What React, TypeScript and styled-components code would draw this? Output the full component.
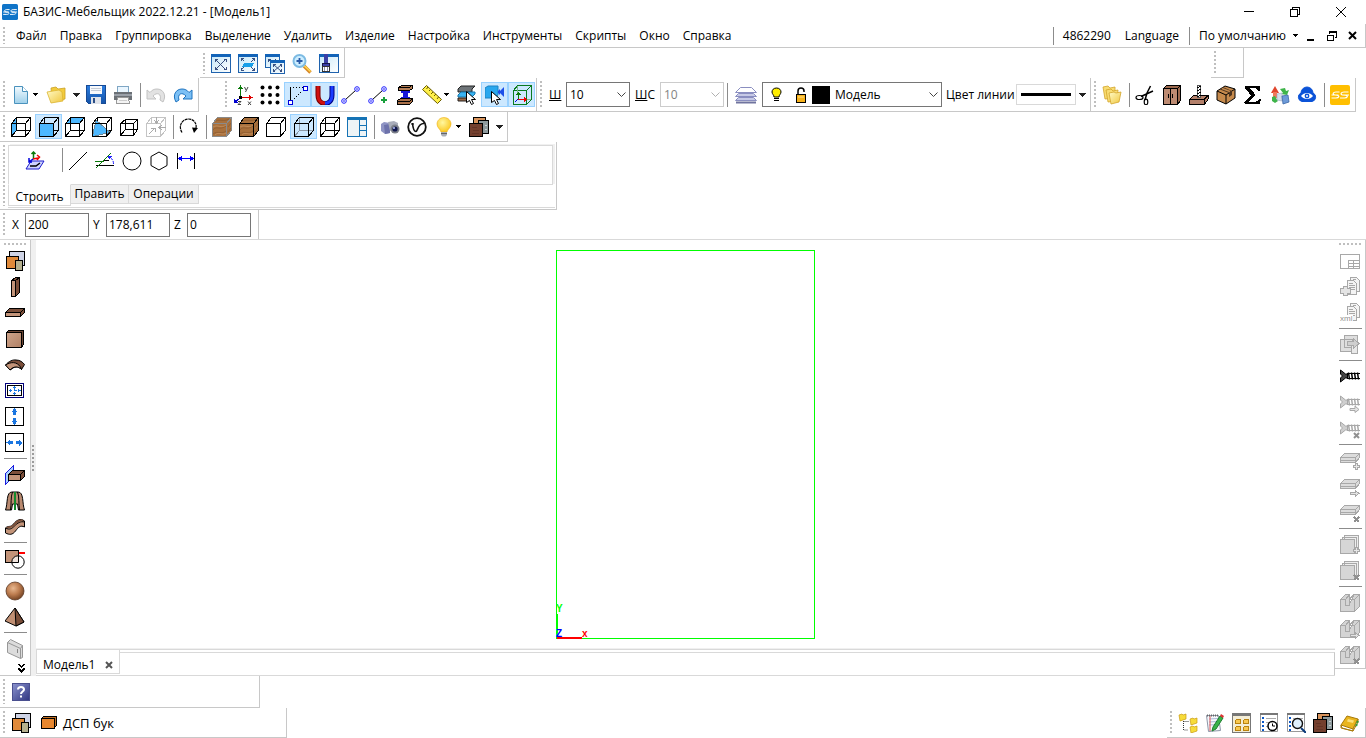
import React from "react";
import styled, { createGlobalStyle, css } from "styled-components";

const LINE = "#c8c8c8";
const SOFT = "#d9d9d9";
const FACE = "#f0f0f0";

const GlobalStyle = createGlobalStyle`
  * { box-sizing: border-box; }
  body { margin: 0; background: #fff; }
  body, button, input, select {
    font-family: "Open Sans", "Noto Sans", sans-serif;
    font-size: 12px;
    line-height: 16px;
    color: #000;
  }
  svg { display: block; flex: none; }
`;

/* ---------- page frame ---------- */

const Page = styled.div`
  display: flex;
  flex-direction: column;
  min-height: 100vh;
  overflow: hidden;
`;

const TitleBar = styled.header`
  display: flex;
  align-items: center;
  height: 24px;
  padding: 0 2px;
`;

const Title = styled.h1`
  flex: 1;
  margin: 0 0 0 5px;
  font-size: 12px;
  font-weight: 400;
  white-space: nowrap;
`;

const PlainButton = styled.button`
  display: flex;
  align-items: center;
  justify-content: center;
  flex: none;
  padding: 0;
  border: 0;
  background: none;
  white-space: nowrap;
`;

const CaptionButton = styled(PlainButton)`
  width: 46px;
  height: 20px;
`;

const MenuBar = styled.nav`
  display: flex;
  align-items: center;
  height: 24px;
  border-right: 1px solid ${LINE};
  border-bottom: 1px solid ${LINE};
`;

const MenuItem = styled(PlainButton)`
  height: 22px;
`;

const MenuList = styled.div`
  display: flex;
  gap: 13px;
  padding-left: 8px;
`;

const MenuRight = styled.div`
  display: flex;
  align-items: center;
  margin-left: auto;
  padding-right: 3px;
`;

const StatusItem = styled(MenuItem)`
  padding: 0 7px;
`;

const ChildButton = styled(PlainButton)<{ $w: number }>`
  width: ${(p) => p.$w}px;
  height: 20px;
`;

const Row = styled.div<{ $h: number; $indent?: number }>`
  display: flex;
  flex: none;
  height: ${(p) => p.$h}px;
  padding-left: ${(p) => p.$indent || 0}px;
`;

const Toolbar = styled.div<{ $gap?: number; $w?: number; $end?: number; $push?: boolean; $low?: boolean }>`
  display: flex;
  align-items: center;
  flex: none;
  width: ${(p) => (p.$w ? p.$w + "px" : "auto")};
  margin-left: ${(p) => (p.$push ? "auto" : (p.$gap || 0) + "px")};
  margin-right: ${(p) => p.$end || 0}px;
  padding-top: ${(p) => (p.$low ? 2 : 0)}px;
  padding-right: 1px;
  border-right: 1px solid ${LINE};
  border-bottom: 1px solid ${LINE};
`;

const Grip = styled.div`
  flex: none;
  align-self: stretch;
  width: 2px;
  margin: 3px 3px;
  background: repeating-linear-gradient(to bottom, #bfbfbf 0 2px, transparent 2px 4px);
`;

const TopGrip = styled.div`
  flex: none;
  width: 23px;
  height: 2px;
  margin: 3px auto;
  background: repeating-linear-gradient(to right, #bfbfbf 0 2px, transparent 2px 4px);
`;

const ToolButton = styled(PlainButton)<{ $on?: boolean; $w?: number }>`
  width: ${(p) => p.$w || 27}px;
  height: 25px;
  padding-right: ${(p) => (p.$w || p.$on ? 0 : 1)}px;
  ${(p) =>
    p.$on &&
    css`
      background: #cce8ff;
      border: 1px solid #99d1ff;
    `}
`;

const SideButton = styled(PlainButton)`
  width: 27px;
  height: 26px;
`;

const DropButton = styled(PlainButton)<{ $wide?: boolean }>`
  width: ${(p) => (p.$wide ? 13 : 10)}px;
  margin-left: ${(p) => (p.$wide ? 0 : -2)}px;
  height: 25px;
  justify-content: ${(p) => (p.$wide ? "center" : "flex-start")};
`;

const Sep = styled.div<{ $h?: number }>`
  flex: none;
  width: 1px;
  height: ${(p) => p.$h || 24}px;
  margin: 0 2px 0 3px;
  background: #8c8c8c;
`;

const SideSep = styled.div`
  flex: none;
  width: 23px;
  height: 1px;
  margin: 2px auto 3px;
  background: #8c8c8c;
`;

/* ---------- fields ---------- */

const FieldLabel = styled.label<{ $w: number; $gap?: number }>`
  flex: none;
  width: ${(p) => p.$w}px;
  margin-left: ${(p) => p.$gap || 0}px;
  white-space: nowrap;
`;

const Combo = styled.div<{ $w: number; $off?: boolean }>`
  position: relative;
  display: flex;
  align-items: center;
  flex: none;
  width: ${(p) => p.$w}px;
  height: 25px;
  border: 1px solid ${(p) => (p.$off ? "#cccccc" : "#767676")};
  background: #fff;
`;

const ComboSelect = styled.select`
  flex: 1;
  min-width: 0;
  height: 22px;
  padding: 0 20px 0 3px;
  border: 0;
  outline: 0;
  appearance: none;
  background: none;
  &:disabled { color: #838383; opacity: 1; }
`;

const ComboArrow = styled.span`
  position: absolute;
  right: 3px;
  top: 9px;
  pointer-events: none;
`;

const ComboIcons = styled.span`
  display: flex;
  align-items: center;
  gap: 13px;
  padding-left: 8px;
`;

const Swatch = styled.span`
  flex: none;
  width: 18px;
  height: 18px;
  margin: 0 2px 0 5px;
  background: #000;
`;

const LineBox = styled(PlainButton)`
  width: 60px;
  height: 21px;
  border: 1px solid ${SOFT};
`;

const LineSample = styled.span`
  width: 50px;
  height: 3px;
  background: #000;
`;

const CoordLabel = styled.label`
  flex: none;
  width: 17px;
  padding-left: 4px;
`;

const CoordInput = styled.input`
  flex: none;
  width: 64px;
  height: 24px;
  padding: 0 2px;
  border: 1px solid #767676;
  border-radius: 0;
  outline: 0;
`;

/* ---------- tabbed tool panel ---------- */

const TabPanel = styled.section`
  display: flex;
  flex: none;
  width: 557px;
  border-right: 1px solid ${LINE};
  border-bottom: 1px solid ${LINE};
`;

const TabBody = styled.div`
  display: flex;
  flex-direction: column;
  flex: 1;
  margin: 2px 1px 1px 0;
  border-bottom: 1px solid ${SOFT};
`;

const TabTools = styled.div`
  display: flex;
  align-items: flex-start;
  height: 40px;
  padding: 2px 0 0 13px;
  border: 1px solid ${SOFT};
  box-shadow: 2px -1px 0 ${FACE};
  margin: 1px 2px 0 0;
`;

const TabGap = styled.div`
  width: 10px;
`;

const TabStrip = styled.div`
  display: flex;
  align-items: flex-start;
  margin-top: -1px;
`;

const Tab = styled.button<{ $active?: boolean; $w: number }>`
  width: ${(p) => p.$w}px;
  height: ${(p) => (p.$active ? 22 : 20)}px;
  padding: ${(p) => (p.$active ? "4px 0 0" : "0")};
  border: 1px solid ${SOFT};
  border-left-width: ${(p) => (p.$active ? 1 : 0)}px;
  border-top-color: ${(p) => (p.$active ? "#fff" : SOFT)};
  background: ${(p) => (p.$active ? "#fff" : FACE)};
  white-space: nowrap;
`;

/* ---------- work area ---------- */

const Work = styled.main`
  display: flex;
  flex: 1;
  border-top: 1px solid ${SOFT};
  margin-top: -1px;
`;

const SideBar = styled.div<{ $left?: boolean }>`
  display: flex;
  flex-direction: column;
  align-items: center;
  align-self: ${(p) => (p.$left ? "stretch" : "flex-start")};
  flex: none;
  width: 31px;
  border-right: 1px solid ${LINE};
  border-bottom: 1px solid ${LINE};
`;

const MoreButton = styled(PlainButton)`
  width: 27px;
  height: 12px;
  padding-left: 12px;
`;

const Splitter = styled.div`
  display: flex;
  align-items: center;
  flex: none;
  width: 5px;
  padding-left: 1px;
  background: ${FACE};
`;

const SplitterDots = styled.div`
  width: 2px;
  height: 26px;
  background: repeating-linear-gradient(to bottom, #9c9c9c 0 2px, transparent 2px 4px);
`;

const Center = styled.div`
  display: flex;
  flex-direction: column;
  flex: 1;
  min-width: 0;
`;

const Viewport = styled.div`
  display: flex;
  justify-content: center;
  flex: 1;
  padding-top: 10px;
  border-bottom: 1px solid ${FACE};
`;

const DocTabs = styled.div`
  display: flex;
  flex: none;
  height: 27px;
  border-top: 1px solid ${SOFT};
  border-bottom: 1px solid ${SOFT};
`;

const DocTab = styled.div`
  display: flex;
  align-items: center;
  justify-content: space-between;
  flex: none;
  width: 84px;
  height: 24px;
  padding: 6px 6px 0;
  border: 1px solid ${SOFT};
  border-top: 0;
`;

const DocRest = styled.div`
  flex: 1;
  margin-top: 2px;
  border-top: 1px solid ${SOFT};
  border-right: 1px solid ${LINE};
`;

const Material = styled(PlainButton)`
  gap: 6px;
  padding-left: 6px;
  font-size: 13px;
`;

/* ---------- icons ---------- */

type SvgProps = { children: React.ReactNode; w?: number; h?: number; soft?: boolean };
const Svg = ({ children, w = 20, h = 20, soft }: SvgProps) => (
  <svg width={w} height={h} viewBox={`0 0 ${w} ${h}`} fill="none" shapeRendering={soft ? "auto" : "crispEdges"} aria-hidden="true">
    {children}
  </svg>
);

const Defs = () => (
  <svg width="0" height="0" aria-hidden="true">
    <defs>
      <linearGradient id="sky" x1="0" y1="0" x2="1" y2="1"><stop offset="0" stopColor="#c4e6f8" /><stop offset="1" stopColor="#fff" /></linearGradient>
      <linearGradient id="page" x1="0" y1="0" x2="0" y2="1"><stop offset="0" stopColor="#f4fbff" /><stop offset="1" stopColor="#9fd0ea" /></linearGradient>
      <linearGradient id="gold" x1="0" y1="0" x2="1" y2="1"><stop offset="0" stopColor="#fffbc8" /><stop offset="1" stopColor="#f0c63c" /></linearGradient>
      <linearGradient id="wood" x1="0" y1="0" x2="1" y2="1"><stop offset="0" stopColor="#cfa58c" /><stop offset="1" stopColor="#b08064" /></linearGradient>
      <linearGradient id="blue" x1="0" y1="0" x2="0" y2="1"><stop offset="0" stopColor="#2b7de0" /><stop offset="1" stopColor="#1453a8" /></linearGradient>
      <linearGradient id="night" x1="0" y1="0" x2="1" y2="1"><stop offset="0" stopColor="#8c94cf" /><stop offset="1" stopColor="#2f3580" /></linearGradient>
      <radialGradient id="ball" cx="0.4" cy="0.35" r="0.7"><stop offset="0" stopColor="#e8b890" /><stop offset="0.5" stopColor="#bd7d50" /><stop offset="1" stopColor="#6d3d1e" /></radialGradient>
      <radialGradient id="glow" cx="0.4" cy="0.35" r="0.7"><stop offset="0" stopColor="#fff7a0" /><stop offset="1" stopColor="#fbc61a" /></radialGradient>
    </defs>
  </svg>
);

const Down = ({ wide }: { wide?: boolean }) =>
  wide ? <Svg w={7} h={4}><path d="M0 0h7L3.500 4z" fill="#222" /></Svg> : <Svg w={5} h={3}><path d="M0 0h5L2.500 3z" fill="#000" /></Svg>;

const Chevron = ({ color = "#444" }: { color?: string }) => (
  <Svg w={9} h={6} soft><path d="M.5.500l4 4 4-4" stroke={color} /></Svg>
);

const Brand = ({ bg, size }: { bg: string; size: number }) => (
  <svg width={size} height={size} viewBox="0 0 20 20" fill="none" aria-hidden="true">
    <rect width="20" height="20" rx="2" fill={bg} />
    <path d="M9.500 7H6C3 7 2 9.500 5 10l2 .2c3 .5 2 2.800-1 2.800H1.500M1.500 10h7M18.500 7H14c-3 0-4 2.500-1.500 3l3 .2c3 .5 2 2.800-1 2.800H10M12 10h7" stroke="#fff" strokeWidth="1.200" />
  </svg>
);

type CubeProps = { front?: string; left?: string; top?: string; all?: string; stroke?: string; solid?: boolean; dim?: boolean; cut?: boolean; grain?: boolean };
const Cube = ({ front, left, top, all, stroke = "#000", solid, dim, cut, grain }: CubeProps) => (
  <Svg>
    {all && <path d="M.5 6.500l5-6h14v13l-5 6H.5z" fill={all} />}
    {grain && <path shapeRendering="auto" d="M1 13c4-5 6 1 13-4M1 17c5-4 8 1 13-3M4 4c4-2 8 1 13-2M16 10l3-4M16 15l3-4" stroke="#6d4220" strokeOpacity=".35" />}
    {grain && <path shapeRendering="auto" d="M1 10c5-3 8 2 13-2M3 18c4-4 7 1 11-2" stroke="#e0b080" strokeOpacity=".4" />}
    {left && <path d="M.5 6.500l5-6v13l-5 6z" fill={left} />}
    {top && <path d="M.5 6.500l5-6h14l-5 6z" fill={top} />}
    {!solid && <path d="M5.500.500v13h14M5.500 13.500l-5 6" stroke={dim ? "#8d9aa8" : stroke} />}
    {front && <rect x=".5" y="6.500" width="14" height="13" fill={front} />}
    {cut && <path d="M.5 19.500L4 3l14 12.500z" fill="#4db8ff" stroke="#6c8796" />}
    <path d="M.5 6.500h14v13H.5zM.5 6.500l5-6h14v13l-5 6M14.500 6.500l5-6" stroke={stroke} />
  </Svg>
);

const Win = ({ x = 0, y = 0, w = 20, h = 19 }: { x?: number; y?: number; w?: number; h?: number }) => (
  <g>
    <rect x={x + 0.5} y={y + 0.5} width={w - 1} height={h - 1} fill="url(#sky)" stroke="#1f62ad" />
    <rect x={x} y={y} width={w} height="3" fill="#1263b8" />
  </g>
);

const FitAll = () => <Svg><Win /><path d="M5 6l9 9M14 6l-9 9" stroke="#3a5080" shapeRendering="auto" /><path d="M4.500 8V5.500H7M13 5.500h2.500V8M15.500 13v2.500H13M7 15.500H4.500V13" stroke="#3a5080" /></Svg>;
const FitSelected = () => <Svg><Win /><path d="M3.500 7V4.500H6M14 4.500h2.500V7M16.500 14v2.500H14M6 16.500H3.500V14M3 4l3 3M16 16l-3-3M16 5l-3 3M3 16l3-3" stroke="#3a5080" /><path d="M4 13l2-4h10l-2 4z" fill="#199fe8" /></Svg>;
const FitWindows = () => <Svg><Win w={15} h={14} /><path d="M3 5l3 3M11 5L9 7M3.500 8V5.500H6" stroke="#3a5080" /><Win x={5} y={6} w={15} h={14} /><path d="M9 11l7 6M16 11l-7 6" stroke="#3a5080" shapeRendering="auto" /><path d="M8.500 13v-2.500h2M15 10.500h1.500V13M16.500 15v2.500H15M10 17.500H8.500V15" stroke="#3a5080" /></Svg>;
const ZoomIn = () => <Svg soft><path d="M12 12l6.500 6.500" stroke="#d98a2a" strokeWidth="3.500" /><path d="M12 11.500l6.500 6" stroke="#ffd84d" strokeWidth="1.500" /><circle cx="7.500" cy="7" r="6" fill="#cdeeff" stroke="#7dbbe3" strokeWidth="2" /><path d="M7.500 4v6M4.500 7h6" stroke="#2a5ba8" strokeWidth="1.800" /></Svg>;
const Brush = () => <Svg><Win /><rect x="5" y="0" width="4" height="9" fill="#3a3fa6" /><path d="M3.500 9.500h7v3h-7z" fill="#3a3fa6" stroke="#15174a" /><path d="M3.500 12.500h7v5h-7z" fill="#fff" stroke="#333" /><path d="M5.500 13v4M8.500 13v4" stroke="#8a8fae" /></Svg>;

const NewDoc = () => <Svg soft><path d="M3.500 1.500h8l5 5v12h-13z" fill="url(#page)" stroke="#4a92bd" /><path d="M11.500 1.500v5h5" fill="#fff" stroke="#4a92bd" /></Svg>;
const OpenFolder = () => <Svg soft><path d="M5 3l5-1 2 2 7-1v11L6 17z" fill="#f3cb3c" stroke="#c9a126" strokeWidth=".8" /><path d="M1 7l12-2 3 2 1 9-12 2z" fill="url(#gold)" stroke="#dcb531" strokeWidth=".8" /></Svg>;
const Save = () => <Svg><path d="M.5.500h19v18h-17l-2-2z" fill="url(#blue)" stroke="#174a94" /><rect x="4" y="1" width="12" height="8" fill="#f7f9fc" /><path d="M5 3.500h10M5 5.500h10" stroke="#c4cbd6" /><rect x="5" y="12" width="10" height="7" fill="#dfe3ea" /><rect x="7" y="13" width="2" height="5" fill="#2c4f86" /></Svg>;
const Printer = () => <Svg><rect x="4.500" y="1.500" width="11" height="7" fill="#eaf6ff" stroke="#7fa6c4" /><rect x="1" y="7" width="18" height="8" fill="#6b7076" /><rect x="1" y="9" width="18" height="2" fill="#9aa0a8" /><path d="M4.500 12.500h11l1 6h-13z" fill="#f4f4f4" stroke="#999" /><path d="M6 15.500h8" stroke="#ccc" /></Svg>;
const Undo = () => <Svg soft><path d="M17 17c4-7 0-13-6-13-3 0-5 1-7 3.500L1 5v9h9L7 11c4-4.500 9-2 7 4z" fill="#e2e2e2" stroke="#c2c2c2" /></Svg>;
const Redo = () => <Svg soft><path d="M3 17C-1 10 3 4 9 4c3 0 5 1 7 3.500L19 5v9h-9l3-3c-4-4.500-9-2-7 4z" fill="#7cc0f5" stroke="#1f74c0" /></Svg>;

const Axes = () => <Svg><path d="M7.500 12V1" stroke="#0a7a0a" /><path d="M5 4l2.500-4L10 4z" fill="#0a7a0a" /><path d="M8 12.500h9" stroke="#e00000" /><path d="M16 10l4 2.500-4 2.500z" fill="#e00000" /><path d="M7 13l-5 4" stroke="#0000d0" /><path d="M1 14v4h4z" fill="#0000d0" /><rect x="6" y="11" width="3" height="3" fill="#000" /><path shapeRendering="auto" d="M11.500 2l1.500 3M15 2l-2.500 5M5 16.500h3l-3 3h3M15 16.500l3 3.500M18 16.500l-3 3.500" stroke="#444" /></Svg>;
const Dots = () => <Svg soft>{[2.5, 10, 17.5].map((y) => [2.5, 10, 17.5].map((x) => <circle key={x + "-" + y} cx={x} cy={y} r="2" fill="#000" />))}</Svg>;
const SnapCorner = () => <Svg><path d="M2.500 17V3" stroke="#000" /><path d="M2 2.500h14M4 16L16 4" stroke="#000" strokeDasharray="1 2" /><rect x="15.500" y="1.500" width="4" height="4" fill="#fff" stroke="#0000e0" /><rect x=".5" y="15.500" width="4" height="4" fill="#fff" stroke="#0000e0" /></Svg>;
const Magnet = () => <Svg soft><path d="M3 1v9c0 9 7 8.500 7 8.500" stroke="#7a0000" strokeWidth="5" /><path d="M3 1v9c0 9 7 8 7 8" stroke="#d01010" strokeWidth="3" /><path d="M17 1v9c0 9-7 8.500-7 8.500" stroke="#000080" strokeWidth="5" /><path d="M17 1v9c0 9-7 8-7 8" stroke="#1a3cff" strokeWidth="3" /></Svg>;
const Segment = ({ plus }: { plus?: boolean }) => <Svg soft><path d="M4 15L15 5" stroke="#000" /><circle cx="3" cy="16" r="2.300" fill="#fff" stroke="#1d1dff" /><circle cx="16" cy="4" r="2.300" fill="#fff" stroke="#1d1dff" /><path d="M2 16h2M15 4h2" stroke="#1d1dff" />{plus && <path d="M16 12v6M13 15h6" stroke="#18a03c" strokeWidth="2" />}</Svg>;
const Clamp = () => <Svg><path d="M3.500 2.500l3-2h11v3l-3 2h-11z" fill="#b47d55" stroke="#000" /><path d="M4 2.500h10l3-2" stroke="#000" /><path d="M6 6h9v2h-2v4h2v2H6v-2h2V8H6z" fill="#1616d8" /><path d="M2.500 15.500l3-2h12v3l-3 3h-12z" fill="#a86f48" stroke="#000" /><path d="M3 16.500h11l3-2" stroke="#000" /></Svg>;
const Ruler = () => <Svg soft><path d="M.5 4.500l4-4 15 14-4 4z" fill="#fff04a" stroke="#6b5d00" /><path d="M6 2L4.500 4M8.500 4.500L7 6M11 7L9 9M14 9l-2 2M16.500 12L15 14" stroke="#6b5d00" /></Svg>;
const Pointer = ({ x, y }: { x: number; y: number }) => <path transform={`translate(${x} ${y})`} d="M.5.500v11l3-2 2 4 2-1-2-4h4z" fill="#fff" stroke="#000" />;
const SlabPick = () => <Svg soft><path d="M1 4l3-3h14l-3 3v3H1z" fill="#6e7478" stroke="#222" /><path d="M1 10l3-3h14v2l-3 3H1z" fill="#39b3f2" stroke="#1676ab" /><path d="M1 13h9v3H1z" fill="#9a6a48" stroke="#222" /><Pointer x={9} y={6} /></Svg>;
const CamPick = () => <Svg soft><path d="M0 3l3-2h10v9l-2 3H0z" fill="#29a7ee" stroke="#1c83c4" /><path d="M13 6l2-2v2l4-4v10l-4-4v2l-2-2z" fill="#1c50e8" /><Pointer x={6} y={6} /></Svg>;
const BoxAxes = () => <Svg><path d="M1.500 5.500h13v14h-13zM1.500 5.500l4-5h14v14l-5 5M14.500 5.500l5-5" stroke="#0a7a20" /><path d="M5.500.500v7M14 14.500h5" stroke="#7fb98a" /><path d="M6.500 14V8" stroke="#0a7a0a" /><path d="M4 9.500h5L6.500 7z" fill="#0a7a0a" /><path d="M6 14.500h7" stroke="#e00" /><path d="M12 12v5l3-2.500z" fill="#e00" /><path d="M6 14l-3 3" stroke="#00d" /></Svg>;
const Layers = () => <svg width="22" height="18" viewBox="0 0 22 18" fill="none" aria-hidden="true"><path d="M5.500 1.500h11l5 5H.5z" fill="#fff" stroke="#8a8ec0" /><path d="M3.500 7.500l-3 3h21l-3-3zM3.500 11.500l-3 3h21l-3-3z" fill="#c7cae6" stroke="#8a8ec0" /><path d="M1 16.500h20" stroke="#70749f" strokeWidth="2" /></svg>;
const SmallBulb = () => <Svg w={11} h={15} soft><path d="M5.500 1C2.500 1 1 3 1 5c0 2 2 3 2 5h5c0-2 2-3 2-5 0-2-1.500-4-4.500-4z" fill="#ffee00" stroke="#000" /><path d="M3 11.500h5M3 13.500h5" stroke="#000" /></Svg>;
const Lock = () => <Svg w={12} h={16} soft><path d="M3 8V4c0-4 6-4 6 0v1" stroke="#000" strokeWidth="1.500" /><rect x="1.500" y="7.500" width="9" height="8" fill="#f7b21b" stroke="#000" /><path d="M3 10h6" stroke="#ffe08a" /></Svg>;

const Folders = () => <Svg soft><path d="M1 2l5-1 2 2 5-1v11L3 14z" fill="#f8dc72" stroke="#d3a52b" strokeWidth=".8" /><path d="M4 5l5-1 2 2 5-1-1 11-9 1z" fill="#f8dc72" stroke="#d3a52b" strokeWidth=".8" /><path d="M7 8l5-1 2 1 5-1-2 10-8 2z" fill="url(#gold)" stroke="#d3a52b" strokeWidth=".8" /></Svg>;
const Scissors = () => <Svg soft><path d="M15.500 1L12 8l-2 7M18 6L6 11.500" stroke="#000" strokeWidth="1.500" /><ellipse cx="4.500" cy="12.500" rx="3.500" ry="2" stroke="#000" strokeWidth="1.200" /><ellipse cx="11" cy="17" rx="1.800" ry="2.800" stroke="#000" strokeWidth="1.200" /></Svg>;
const Cabinet = () => <Svg><path d="M1.500 3.500l3-3h14v15l-3 4h-14z" fill="#9d6a4f" stroke="#000" /><path d="M1.500 3.500h14v16h-14z" fill="#bd8b72" stroke="#000" /><path d="M8.500 4v15M6.500 9v4M10.500 9v4M15.500 3.500l3-3" stroke="#000" /></Svg>;
const Drill = () => <Svg><path d="M.5 14.500l4-4h15v3l-4 6h-15z" fill="#b3806a" stroke="#000" /><path d="M1 14.500h14l4-4M15.500 15v4" stroke="#000" /><path d="M8.500.500h3v12h-3z" fill="#fff" stroke="#555" /><path d="M8 3l4-2M8 6l4-2M8 9l4-2M8 12l4-2" stroke="#000" /></Svg>;
const Package = () => <Svg soft><path d="M1 6l8-5 10 3v9l-9 6-9-4z" fill="#c68a4c" stroke="#000" /><path d="M1 6l9 4 9-6M10 10v9" stroke="#000" /><path d="M4 4.500l9 3.500v4l3-2V6L7 2z" fill="#4d3520" /><path d="M6 3.500l8 3" stroke="#c68a4c" strokeWidth="1.500" /></Svg>;
const Sigma = () => <Svg><path d="M1.500 1h15v5h-1.500c-.5-2-1-3-3-3H7l5.500 7-6 6.500H13c2 0 3-1 3.500-3H18L17 19H1.500v-1.500L8 10.500 1.500 2.500z" fill="#000" /></Svg>;
const Shapes = () => <Svg soft><path d="M5 1l4 7H1z" fill="#e0452c" /><path d="M3 7h4v6H3z" fill="#f0785a" /><path d="M10 4l5-1 1 3 3-1-2 5-6-1 2-1z" fill="#3eb449" /><path d="M2 12l3-1 1 2 2 3-3 2-3-2z" fill="#3eb449" /><path d="M7 9l5-1v8l-5-1z" fill="#d6deeb" stroke="#9aa9c4" strokeWidth=".6" /><path d="M12 11l6-1 1 7-6 2z" fill="#6d9ad8" stroke="#3a66a6" strokeWidth=".8" /></Svg>;
const CloudEye = () => <Svg soft><path d="M5 16.500a4.500 4.500 0 01-1-8.500 6 6 0 0112 0 4.500 4.500 0 01-1 8.500z" fill="#0b53d8" stroke="#0b53d8" strokeWidth="1" /><path d="M4 11c3-4 9-4 12 0-3 4-9 4-12 0z" fill="#fff" /><circle cx="10" cy="11" r="2.400" fill="#0b53d8" /><circle cx="10" cy="11" r="1" fill="#fff" /></Svg>;

const GreyCube = () => <Svg><path d="M.5 6.500h14v13H.5zM.5 6.500l5-6h14v13l-5 6M14.500 6.500l5-6M5.500.500v5" stroke="#c4c4c4" /><path d="M10.500 0v6M8 3l2.500 3L13 3M20 10.500h-7M16 8l-3 2.500L16 13M3 17l6-6M5 11h4v4" stroke="#ababab" /></Svg>;
const SmallCube = () => <Svg><path d="M1.500 6.500h13v12h-13zM1.500 6.500l5-4h12v10l-4 6M14.500 6.500l4-4M6.500 2.500v10h12M6.500 12.500l-5 6" stroke="#000" /></Svg>;
const Rotate = () => <Svg soft><path d="M3 15.500C-1.500 8 4 2 9.500 2c5 0 8.500 4 7.500 9" stroke="#000" strokeWidth="1.200" strokeDasharray="3 .6" /><path d="M13 10.500l6 .500-4 5z" fill="#000" /></Svg>;
const Panels = () => <Svg><rect x=".5" y=".5" width="19" height="19" fill="#eef4f6" stroke="#1573b5" /><rect x="0" y="0" width="20" height="3" fill="#1573b5" /><path d="M12.500 3v16M13 8.500h7M13 13.500h7" stroke="#1573b5" /></Svg>;
const Camera = () => <Svg soft><path d="M1 7l3-2 6 1v10l-5 1-4-3z" fill="#8f94c4" /><path d="M4 8l6-1v9l-5 1z" fill="#6d72ab" /><path d="M8 5l6-1 4 2v5l-8 3z" fill="#a9adba" /><circle cx="15" cy="12" r="4.500" fill="#7c808a" /><circle cx="15" cy="12" r="2.600" fill="#11174d" /><circle cx="14" cy="11" r="1" fill="#b6c4ff" /></Svg>;
const VRay = () => <Svg soft><circle cx="10" cy="10" r="8.800" fill="#fff" stroke="#111" strokeWidth="1.800" /><path d="M5.500 6c.5 6 2 8.500 3.500 8.500S11 6 17 6.500" stroke="#111" strokeWidth="1.600" /><path d="M4 7h3" stroke="#111" /></Svg>;
const Bulb = () => <Svg soft><path d="M10 .500C5.500.500 3 4 3 7c0 4 3.500 5 4 8h6c.5-3 4-4 4-8 0-3-2.500-6.500-7-6.500z" fill="url(#glow)" stroke="#f0b018" strokeWidth=".6" /><path d="M7 15h6v3l-1.500 1.500h-3L7 18z" fill="#a9adb5" /><path d="M7 16.500h6" stroke="#666" /></Svg>;
const Textures = () => <Svg><rect x="4.500" y=".5" width="12" height="10" rx="1" fill="#d9945c" stroke="#000" /><rect x="9.500" y="3.500" width="10" height="13" fill="#8e9a9d" stroke="#000" /><path d="M12 6h2M16 8h2M16 12h2M13 9h1" stroke="#c9d2d4" /><rect x=".5" y="6.500" width="13" height="13" rx="1" fill="#74402f" stroke="#000" /><path d="M3 10.500h5M4 13.500h6M3 16.500h7" stroke="#633426" /></Svg>;

const SketchPlane = () => <Svg soft><path d="M6 10h13l-5 8H1z" fill="#cfd4ff" stroke="#1c1ccc" /><path d="M5 15h6l4-3" stroke="#000" strokeWidth="1.500" /><path d="M8.500 8V1M6.500 3l2-2 2 2" stroke="#0a7a0a" strokeWidth="1.500" /><path d="M8 8l5-1M12 4l2.500 2L12 9" stroke="#e00" strokeWidth="1.500" /><path d="M8 8l-4 3M4 7v4h3" stroke="#00d" strokeWidth="1.500" /></Svg>;
const LineIcon = () => <Svg><path d="M1 19L19 1" stroke="#000" /></Svg>;
const AngleIcon = () => <Svg><path d="M1 14.500h18M9 9.500h5" stroke="#000" /><path shapeRendering="auto" d="M1 17L16 2M0 10.500h9" stroke="#0a7a0a" /><path shapeRendering="auto" d="M18.500 13c0-3-1-5-4-7" stroke="#1d1dff" strokeDasharray="3 1" /><path d="M12 4.500l5 1-3 3z" fill="#1d1dff" /></Svg>;
const CircleIcon = () => <Svg soft><circle cx="10" cy="10" r="9" stroke="#000" /></Svg>;
const HexIcon = () => <Svg soft><path d="M10 1l8 4.500v9L10 19l-8-4.500v-9z" stroke="#000" /></Svg>;
const DimIcon = () => <Svg><path d="M1.500 2v16M18.500 2v16" stroke="#000" /><path d="M3 7.500h14" stroke="#00f" /><path d="M2 7.500l4-3v6zM18 7.500l-4-3v6z" fill="#00f" /></Svg>;

const MaterialStack = () => <Svg><rect x="4.500" y=".5" width="15" height="14" fill="#cfd4e6" stroke="#000" /><rect x="1.500" y="5.500" width="12" height="12" fill="#e08a3a" stroke="#000" /><rect x="10.500" y="9.500" width="7" height="10" fill="#b5b08e" stroke="#000" /></Svg>;
const VPanel = () => <Svg><path d="M6.500 3.500l4-3h4v15l-4 4h-4z" fill="#7c4f3a" stroke="#000" /><path d="M6.500 3.500h4v16h-4zM10.500 3.500l4-3" fill="#c39479" stroke="#000" /></Svg>;
const HPanel = () => <Svg><path d="M.5 9.500l4-4h15v4l-4 4H.5z" fill="#7c4f3a" stroke="#000" /><path d="M.5 9.500h15v4H.5z" fill="#c39479" stroke="#000" /><path d="M15.500 9.500l4-4" stroke="#000" /></Svg>;
const FPanel = () => <Svg><path d="M1.500 3.500l2-2h15v14l-2 3h-15z" fill="#6b4433" stroke="#000" /><rect x="1.500" y="3.500" width="15" height="15" fill="url(#wood)" stroke="#000" /></Svg>;
const Bent = () => <Svg soft><path d="M.5 10C4 6 8 4.500 11 5c4 0 6.500 2 8.500 4.500l-3 5c-3-3.500-7-3.500-11 .5z" fill="#7c4f3a" stroke="#000" /><path d="M.5 10c5-3 11-4 15 2l1 2.500c-3-3.500-8-3.500-11.500.5z" fill="#c39479" stroke="#000" /></Svg>;
const FillBox = () => <Svg><rect x=".5" y="2.500" width="18" height="14" stroke="#00007a" /><rect x="2.500" y="4.500" width="14" height="10" stroke="#000" /><path d="M9.500 6v8M4 9.500h12" stroke="#1a75e0" strokeDasharray="3 2" /><path d="M8 7h3L9.500 5zM8 12h3l-1.500 2zM6 8v3L4 9.500zM13 8v3l2-1.500z" fill="#1a75e0" /></Svg>;
const VFit = () => <Svg><rect x=".5" y=".5" width="18" height="18" stroke="#000" /><path d="M9.500 3v5M9.500 11v5" stroke="#1a75e0" strokeWidth="3" /><path d="M6.500 5h6L9.500 1zM6.500 14h6l-3 4z" fill="#1a75e0" /></Svg>;
const HFit = () => <Svg><rect x=".5" y=".5" width="18" height="18" stroke="#000" /><path d="M3 9.500h5M11 9.500h5" stroke="#1a75e0" strokeWidth="3" /><path d="M5 7v6L1.500 9.500zM14 7v6l3.500-3.500z" fill="#1a75e0" /></Svg>;
const PlaneCut = () => <Svg><path d="M.5 8.500l8-8v11l-8 8z" fill="#a9d2ff" stroke="#1c1cdd" /><path d="M3.500 9.500l4-4h12v6l-4 4h-12z" fill="#7c4f3a" stroke="#000" /><path d="M3.500 9.500h12v6h-12zM15.500 9.500l4-4" fill="#c39479" stroke="#000" /></Svg>;
const Sweep = () => <Svg soft><path d="M.5 19C3 12 1 1 7 1h6c6 0 4 11 6.500 18h-6l-1-6h-5l-1 6z" fill="#b98a70" stroke="#000" /><path d="M5.500 19c1-6 0-13 2-18M14.500 19c-1-6 0-13-2-18" stroke="#000" /><path d="M10 1v18" stroke="#128a2c" strokeWidth="2" /></Svg>;
const Wave = () => <Svg soft><path d="M.5 11c3-3 5 0 8-4s7-6 11-3v6c-4-2-6 0-9 4s-6 4-10 2z" fill="#c39479" stroke="#000" /><path d="M.5 11c4 2 6 1 9-2s6-5 10-4" stroke="#000" /><path d="M1 10.500c3-2 5 0 8-4s7-5 10-3c-4 0-6 2-9 4.500s-5 4-9 2.500z" fill="#7c4f3a" /></Svg>;
const Contour = () => <Svg soft><rect x=".5" y="1.500" width="13" height="12" fill="#c39479" stroke="#000" /><path d="M14 4h6" stroke="#f00" strokeWidth="2" /><circle cx="13" cy="13" r="6.200" fill="#fff" fillOpacity=".75" stroke="#000" /><path d="M7 13.500h6.500V7" stroke="#000" /></Svg>;
const Ball = () => <Svg soft><circle cx="10" cy="10" r="9" fill="url(#ball)" stroke="#5b3824" strokeWidth=".8" /></Svg>;
const Pyramid = () => <Svg soft><path d="M10 1l9 14-8 4-11-5z" fill="#c08f73" stroke="#000" /><path d="M10 1l1 18 8-4z" fill="#7a4e39" stroke="#000" /></Svg>;
const GreyPanel = () => <Svg soft><path d="M2.500 3.500l3-3 12 6v12l-2 1-13-6z" fill="#dcdcdc" stroke="#979797" /><path d="M2.500 3.500l13 6v10M15.500 9.500l2-3" stroke="#979797" /><path d="M12.500 10v4" stroke="#888" /></Svg>;
const More = () => <Svg w={7} h={9}><path d="M.5 0l3 3 3-3M.5 4.500l3 3 3-3" stroke="#000" strokeWidth="1.500" /></Svg>;

const G = "#a8a8a8";
const Frame = () => <Svg><path d="M.5 3.500h19v14H.5zM8.500 17V9.500H19M9 12.500h10M9 15.500h10M13.500 10v7" stroke={G} /></Svg>;
const Pages = ({ xml }: { xml?: boolean }) => (
  <Svg>
    <path d="M10.500.500h6l3 3v11h-9z" fill="#f4f4f4" stroke={G} />
    <path d="M7.500 3.500h6l3 3v11h-9z" fill="#f4f4f4" stroke={G} />
    <path d="M9 6.500h4M9 8.500h6M9 10.500h6M9 12.500h6M13 2.500h3" stroke={G} />
    {xml ? (
      <>
        <rect x="0" y="12" width="13" height="8" fill="#fff" />
        <text x="0" y="18" fontFamily="Liberation Sans, sans-serif" fontSize="8" fill="#8f8f8f">xml</text>
      </>
    ) : (
      <path d="M3.500 9.500h4v2h3v5h-3v2h-4v-2h-3v-5h3z" fill="#e4e4e4" stroke={G} />
    )}
  </Svg>
);
const GreyArrowDoc = () => <Svg><path d="M4.500.500h13v12h-13zM.5 4.500h12v12H.500z" fill="#dedede" stroke={G} /><path d="M11.500 10.500h6v8h-6z" fill="#e9e9e9" stroke={G} /><path d="M7 6.500h6v-3l6 5-6 5v-3H7z" fill="#cfcfcf" stroke={G} /></Svg>;
const Mark = ({ kind }: { kind?: string }) => (
  <>
    {kind === "next" && <path d="M10 15.500h5v-2.500l4 3.500-4 3v-2h-5z" fill="#e4e4e4" stroke={G} />}
    {kind === "del" && <path d="M14 14l5 5M19 14l-5 5" stroke="#909090" strokeWidth="2" />}
    {kind === "add" && <path d="M15.500 12.500h2v2h2v2h-2v2h-2v-2h-2v-2h2z" fill="#e8e8e8" stroke={G} />}
  </>
);
const Screw = ({ c = G, kind }: { c?: string; kind?: string }) => (
  <Svg soft>
    <path d="M.5 3v4l2 2-2 2v4l5-4h2V7h-2z" fill={c === G ? "#cfcfcf" : "#444"} stroke={c} />
    <path d="M7 6.500h13M7 11.500h13" stroke={c} />
    <path d="M8.500 5.500l1 7M11.500 5.500l1 7M14.500 5.500l1 7M17.500 5.500l1 7" stroke={c} strokeWidth="1.500" />
    <Mark kind={kind} />
  </Svg>
);
const GreySlab = ({ kind }: { kind: string }) => <Svg><path d="M.5 6.500l4-4h15v4l-4 5H.500z" fill="#dcdcdc" stroke={G} /><path d="M.5 6.500h15l4-4M15.500 7v4M.5 9.500h15" stroke={G} /><Mark kind={kind} /></Svg>;
const GreySheets = ({ kind }: { kind: string }) => <Svg><path d="M4.500.500h14v14h-14zM2.500 2.500h14v14h-14z" fill="#eee" stroke={G} /><path d="M.5 4.500h14v14H.500z" fill="#d6d6d6" stroke={G} /><Mark kind={kind} /></Svg>;
const GreyGroove = ({ kind }: { kind?: string }) => <Svg><path d="M.5 6.500l5-5h4v9l5-9h5v12l-5 5H.500z" fill="#d4d4d4" stroke={G} /><path d="M.5 6.500h5v6h4v-6h5v12M5.500 6.500l4-5M14.500 6.500l5-5M9.500 6.500l4-5" stroke={G} /><Mark kind={kind} /></Svg>;

const Help = () => <svg width="18" height="18" viewBox="0 0 18 18" fill="none" aria-hidden="true"><rect x=".5" y=".5" width="17" height="17" fill="url(#night)" stroke="#4a4f8f" /><path d="M6 6.500C6 3 12 3 12 6.500c0 2-3 2-3 4.500M9 12.500v2" stroke="#fff" strokeWidth="2" /></svg>;
const OrangePanel = () => <Svg w={16} h={13}><path d="M.5 2.500l2-2h13v9l-3 3H.500z" fill="#c06f22" stroke="#000" /><rect x=".5" y="2.500" width="13" height="10" fill="#e8872f" stroke="#000" /></Svg>;

const Mini = ({ x, y }: { x: number; y: number }) => <path transform={`translate(${x} ${y})`} d="M0 1l3-1 1 1 3-1v5l-6 2z" fill="#f7dc3a" stroke="#c99b12" strokeWidth=".7" />;
const Tree = () => <Svg soft><path d="M5.500 8v9h5M5.500 8.500h5" stroke="#333" strokeDasharray="1 1" /><Mini x={1} y={1} /><Mini x={12} y={5} /><Mini x={12} y={13} /></Svg>;
const Notes = () => <Svg soft><path d="M1.500 2.500h12l2 15-12 1z" fill="#f6f8fc" stroke="#8e97a8" /><path d="M4 6l9-.500M4 9l9-.500M4 12l9-.500" stroke="#a9b9d6" /><path d="M5 3v15" stroke="#d55" /><path d="M2 2.500h11" stroke="#666" strokeDasharray="1 1" strokeWidth="2" /><path d="M8 14l7-11 3 2-7 11-4 2z" fill="#38b24a" stroke="#1d7d2d" /><path d="M15 3l1-2 3 2-1 2z" fill="#d33" /></Svg>;
const Catalog = () => <Svg><rect x=".5" y=".5" width="18" height="19" fill="#f3edd6" stroke="#777" /><rect x="0" y="0" width="19" height="3" fill="#777" /><path d="M3.500 7.500l1-1h4v4h-5zM11.500 7.500l1-1h4v4h-5zM3.500 14.500l1-1h4v4h-5zM11.500 14.500l1-1h4v4h-5z" fill="#f8c850" stroke="#b9820f" /></Svg>;
const List = ({ children }: { children: React.ReactNode }) => <Svg soft><path d="M1.500.500h17v18h-17z" fill="#fff" stroke="#999" /><path d="M1 1h18" stroke="#777" strokeWidth="2" /><path d="M4 4v14" stroke="#0a58c8" strokeWidth="2" strokeDasharray="2 2" /><path d="M7 5.500h10M7 9.500h10M7 13.500h10" stroke="#aaa" />{children}</Svg>;
const History = () => <List><circle cx="13.500" cy="13" r="4.500" fill="#fff" stroke="#000" strokeWidth="1.500" /><path d="M13.500 10.500V13h2.500" stroke="#000" /></List>;
const Search = () => <List><path d="M15 15l5 5" stroke="#0a3a7a" strokeWidth="2" /><circle cx="11.500" cy="10.500" r="5" fill="#dff0fc" stroke="#111" strokeWidth="1.400" /></List>;
const Book = () => <Svg soft><path d="M1 12l6-9 11 3-5 10z" fill="#e9b51d" stroke="#a97a08" /><path d="M1 12l1 3 11 3v-2l5-10v3l-5 9-12-3z" fill="#fff7dc" stroke="#a97a08" /><path d="M8 6l6 1.500-1 2.500-6-1.500z" fill="#fbe07a" /><path d="M18 8l-1 2M17 11l-1 2" stroke="#3a9a3a" strokeWidth="2" /></Svg>;

/* ---------- data ---------- */

type Tool = { label: string; icon?: React.ReactNode; on?: boolean; drop?: "small" | "wide" };
const SEP: Tool = { label: "|" };

const menu = ["Файл", "Правка", "Группировка", "Выделение", "Удалить", "Изделие", "Настройка", "Инструменты", "Скрипты", "Окно", "Справка"];

const viewTools: Tool[] = [
  { label: "Показать все", icon: <FitAll /> },
  { label: "Показать выделенное", icon: <FitSelected /> },
  { label: "Показать во всех окнах", icon: <FitWindows /> },
  { label: "Увеличить", icon: <ZoomIn /> },
  { label: "Перерисовать", icon: <Brush /> },
];
const fileTools: Tool[] = [
  { label: "Новый", icon: <NewDoc />, drop: "small" },
  { label: "Открыть", icon: <OpenFolder />, drop: "wide" },
  { label: "Сохранить", icon: <Save /> },
  { label: "Печать", icon: <Printer /> },
  SEP,
  { label: "Отменить", icon: <Undo /> },
  { label: "Вернуть", icon: <Redo /> },
];
const snapTools: Tool[] = [
  { label: "Оси", icon: <Axes /> },
  { label: "Сетка", icon: <Dots /> },
  { label: "Привязка к углам", icon: <SnapCorner />, on: true },
  { label: "Магнит", icon: <Magnet />, on: true },
  { label: "Отрезок", icon: <Segment /> },
  { label: "Добавить точку", icon: <Segment plus /> },
  { label: "Сжать", icon: <Clamp /> },
  { label: "Измерить", icon: <Ruler />, drop: "small" },
  { label: "Выбор слоя", icon: <SlabPick /> },
  { label: "Выбор объекта", icon: <CamPick />, on: true },
  { label: "Габариты", icon: <BoxAxes />, on: true },
];
const modelTools: Tool[] = [
  { label: "Проекты", icon: <Folders /> },
  SEP,
  { label: "Раскрой", icon: <Scissors /> },
  { label: "Шкаф", icon: <Cabinet /> },
  { label: "Присадка", icon: <Drill /> },
  { label: "Упаковка", icon: <Package /> },
  { label: "Смета", icon: <Sigma /> },
  { label: "Обмен", icon: <Shapes /> },
  { label: "Облако", icon: <CloudEye /> },
  SEP,
  { label: "Базис", icon: <Brand bg="#ffbf00" size={20} /> },
];
const BLUE = "#4db8ff";
const WOOD = "#a8703c";
const cubeTools: Tool[] = [
  { label: "Вид слева", icon: <Cube left={BLUE} /> },
  { label: "Вид спереди", icon: <Cube front={BLUE} />, on: true },
  { label: "Вид сверху", icon: <Cube top={BLUE} /> },
  { label: "Вид по плоскости", icon: <Cube cut /> },
  { label: "Перспектива", icon: <SmallCube /> },
  { label: "Сечение", icon: <GreyCube /> },
  SEP,
  { label: "Вращать", icon: <Rotate /> },
  SEP,
  { label: "Текстура", icon: <Cube all={WOOD} stroke="#8a8a8a" solid grain /> },
  { label: "Текстура с рёбрами", icon: <Cube all={WOOD} solid grain /> },
  { label: "Без невидимых линий", icon: <Cube all="#fff" solid /> },
  { label: "Тонкие невидимые линии", icon: <Cube dim />, on: true },
  { label: "Каркас", icon: <Cube /> },
  { label: "Панели", icon: <Panels /> },
  SEP,
  { label: "Камера", icon: <Camera /> },
  { label: "Визуализация", icon: <VRay /> },
  { label: "Свет", icon: <Bulb />, drop: "small" },
  { label: "Материалы", icon: <Textures />, drop: "wide" },
];
const leftTools: Tool[] = [
  { label: "Материал", icon: <MaterialStack /> },
  { label: "Вертикальная панель", icon: <VPanel /> },
  { label: "Горизонтальная панель", icon: <HPanel /> },
  { label: "Фронтальная панель", icon: <FPanel /> },
  { label: "Гнутая панель", icon: <Bent /> },
  { label: "Заполнить", icon: <FillBox /> },
  { label: "По высоте", icon: <VFit /> },
  { label: "По ширине", icon: <HFit /> },
  SEP,
  { label: "Отсечь", icon: <PlaneCut /> },
  { label: "Тело вращения", icon: <Sweep /> },
  { label: "Тело по траектории", icon: <Wave /> },
  SEP,
  { label: "Контур", icon: <Contour /> },
  SEP,
  { label: "Сфера", icon: <Ball /> },
  { label: "Пирамида", icon: <Pyramid /> },
  SEP,
  { label: "Дверь", icon: <GreyPanel /> },
];
const rightTools: Tool[] = [
  { label: "Чертёж", icon: <Frame /> },
  { label: "Печать листов", icon: <Pages /> },
  { label: "Выгрузить XML", icon: <Pages xml /> },
  SEP,
  { label: "Заменить", icon: <GreyArrowDoc /> },
  SEP,
  { label: "Крепёж", icon: <Screw c="#000" /> },
  { label: "Переместить крепёж", icon: <Screw kind="next" /> },
  { label: "Удалить крепёж", icon: <Screw kind="del" /> },
  SEP,
  { label: "Добавить кромку", icon: <GreySlab kind="add" /> },
  { label: "Переместить кромку", icon: <GreySlab kind="next" /> },
  { label: "Удалить кромку", icon: <GreySlab kind="del" /> },
  SEP,
  { label: "Добавить облицовку", icon: <GreySheets kind="add" /> },
  { label: "Удалить облицовку", icon: <GreySheets kind="del" /> },
  SEP,
  { label: "Паз", icon: <GreyGroove /> },
  { label: "Переместить паз", icon: <GreyGroove kind="next" /> },
  { label: "Удалить паз", icon: <GreyGroove kind="del" /> },
];
const statusTools: Tool[] = [
  { label: "Структура", icon: <Tree /> },
  { label: "Заметки", icon: <Notes /> },
  { label: "Каталог", icon: <Catalog /> },
  { label: "История", icon: <History /> },
  { label: "Поиск", icon: <Search /> },
  { label: "Текстуры", icon: <Textures /> },
  { label: "Справочник", icon: <Book /> },
];

const Tools = ({ items }: { items: Tool[] }) => (
  <>
    {items.map((t, i) =>
      t === SEP ? (
        <Sep key={i} />
      ) : (
        <React.Fragment key={i}>
          <ToolButton $on={t.on} aria-label={t.label}>{t.icon}</ToolButton>
          {t.drop && <DropButton $wide={t.drop === "wide"} aria-label={t.label + ": меню"}><Down wide={t.drop === "wide"} /></DropButton>}
        </React.Fragment>
      )
    )}
  </>
);

const SideTools = ({ items }: { items: Tool[] }) => (
  <>
    {items.map((t, i) => (t === SEP ? <SideSep key={i} /> : <SideButton key={i} aria-label={t.label}>{t.icon}</SideButton>))}
  </>
);

const Model = () => (
  <svg width="259" height="390" viewBox="0 0 259 390" fill="none" shapeRendering="crispEdges" role="img" aria-label="Модель">
    <rect x=".5" y=".5" width="258" height="388" stroke="#00ff00" />
    <path d="M1 364v25" stroke="#00ff00" strokeWidth="2" />
    <path d="M1 388h25" stroke="#ff0000" strokeWidth="2" />
    <g fontFamily="Liberation Sans, sans-serif" fontSize="10" fontWeight="700">
      <text x="0" y="362" fill="#00ff00">Y</text>
      <text x="0" y="387" fill="#0000ff">Z</text>
      <text x="26" y="387" fill="#ff0000">x</text>
    </g>
  </svg>
);

export default function App() {
  return (
    <Page>
      <GlobalStyle />
      <TitleBar>
        <Brand bg="#0f74c8" size={16} />
        <Title>БАЗИС-Мебельщик 2022.12.21 - [Модель1]</Title>
        <CaptionButton aria-label="Свернуть"><Svg w={10} h={10}><path d="M0 4.500h10" stroke="#000" /></Svg></CaptionButton>
        <CaptionButton aria-label="Восстановить"><Svg w={10} h={10}><path d="M.5 2.500h7v7h-7zM2.500 2V.500h7v7H8" stroke="#000" /></Svg></CaptionButton>
        <CaptionButton aria-label="Закрыть"><Svg w={10} h={10} soft><path d="M0 0l10 10M10 0L0 10" stroke="#000" /></Svg></CaptionButton>
      </TitleBar>
      <MenuBar>
        <Grip />
        <MenuList>{menu.map((m) => <MenuItem key={m}>{m}</MenuItem>)}</MenuList>
        <MenuRight>
          <Sep $h={18} />
          <StatusItem>4862290</StatusItem>
          <StatusItem>Language</StatusItem>
          <Sep $h={18} />
          <StatusItem>По умолчанию</StatusItem>
          <Down />
          <ChildButton $w={24} aria-label="Свернуть документ"><Svg w={7} h={10}><path d="M0 9h7" stroke="#000" strokeWidth="2" /></Svg></ChildButton>
          <ChildButton $w={20} aria-label="Восстановить документ"><Svg w={10} h={10}><path d="M.5 4h6v5.500h-6zM0 4.500h7" stroke="#000" /><path d="M2.500 3V.500h7V6H8M2 1.500h8" stroke="#000" /></Svg></ChildButton>
          <ChildButton $w={20} aria-label="Закрыть документ"><Svg w={9} h={9} soft><path d="M1 1l7 7M8 1L1 8" stroke="#000" strokeWidth="2" /></Svg></ChildButton>
        </MenuRight>
      </MenuBar>

      <Row $h={30} $indent={200}>
        <Toolbar $low><Grip /><Tools items={viewTools} /></Toolbar>
        <Toolbar $w={33} $push $end={122}><Grip /></Toolbar>
      </Row>

      <Row $h={34}>
        <Toolbar><Grip /><Tools items={fileTools} /></Toolbar>
        <Toolbar $gap={23}><Grip /><Tools items={snapTools} /></Toolbar>
        <Toolbar>
          <Grip />
          <FieldLabel $w={17} $gap={4} htmlFor="width"><u>Ш</u></FieldLabel>
          <Combo $w={64}>
            <ComboSelect id="width"><option>10</option></ComboSelect>
            <ComboArrow><Chevron /></ComboArrow>
          </Combo>
          <FieldLabel $w={25} $gap={5} htmlFor="step"><u>Ш</u>С</FieldLabel>
          <Combo $w={64} $off>
            <ComboSelect id="step" disabled><option>10</option></ComboSelect>
            <ComboArrow><Chevron color="#b0b0b0" /></ComboArrow>
          </Combo>
          <Sep />
          <ToolButton $w={32} aria-label="Слои"><Layers /></ToolButton>
          <Combo $w={180}>
            <ComboIcons><SmallBulb /><Lock /></ComboIcons>
            <Swatch />
            <ComboSelect aria-label="Слой"><option>Модель</option></ComboSelect>
            <ComboArrow><Chevron /></ComboArrow>
          </Combo>
          <FieldLabel $w={70} $gap={4} htmlFor="lineColor">Цвет линии</FieldLabel>
          <LineBox id="lineColor"><LineSample /></LineBox>
          <DropButton $wide aria-label="Цвет линии: меню"><Down wide /></DropButton>
        </Toolbar>
        <Toolbar><Grip /><Tools items={modelTools} /></Toolbar>
      </Row>

      <Row $h={30}>
        <Toolbar><Grip /><Tools items={cubeTools} /></Toolbar>
      </Row>

      <Row $h={68}>
        <TabPanel>
          <Grip />
          <TabBody>
            <TabTools>
              <ToolButton aria-label="Плоскость эскиза"><SketchPlane /></ToolButton>
              <TabGap />
              <Sep />
              <ToolButton aria-label="Отрезок"><LineIcon /></ToolButton>
              <ToolButton aria-label="Угол"><AngleIcon /></ToolButton>
              <ToolButton aria-label="Окружность"><CircleIcon /></ToolButton>
              <ToolButton aria-label="Многоугольник"><HexIcon /></ToolButton>
              <ToolButton aria-label="Размер"><DimIcon /></ToolButton>
            </TabTools>
            <TabStrip role="tablist">
              <Tab role="tab" aria-selected $active $w={63}>Строить</Tab>
              <Tab role="tab" $w={58}>Править</Tab>
              <Tab role="tab" $w={70}>Операции</Tab>
            </TabStrip>
          </TabBody>
        </TabPanel>
      </Row>

      <Row $h={30}>
        <Toolbar $w={259}>
          <Grip />
          <CoordLabel htmlFor="cx">X</CoordLabel><CoordInput id="cx" defaultValue="200" />
          <CoordLabel htmlFor="cy">Y</CoordLabel><CoordInput id="cy" defaultValue="178,611" />
          <CoordLabel htmlFor="cz">Z</CoordLabel><CoordInput id="cz" defaultValue="0" />
        </Toolbar>
      </Row>

      <Work>
        <SideBar $left>
          <TopGrip />
          <SideTools items={leftTools} />
          <MoreButton aria-label="Ещё"><More /></MoreButton>
        </SideBar>
        <Splitter><SplitterDots /></Splitter>
        <Center>
          <Viewport><Model /></Viewport>
          <DocTabs>
            <DocTab>
              Модель1
              <PlainButton aria-label="Закрыть вкладку"><Svg w={8} h={8} soft><path d="M1 1l6 6M7 1L1 7" stroke="#555" strokeWidth="2" /></Svg></PlainButton>
            </DocTab>
            <DocRest />
          </DocTabs>
        </Center>
        <SideBar>
          <TopGrip />
          <SideTools items={rightTools} />
        </SideBar>
      </Work>

      <Row $h={32}>
        <Toolbar $w={260}><Grip /><ToolButton aria-label="Справка"><Help /></ToolButton></Toolbar>
      </Row>
      <Row $h={30}>
        <Toolbar $w={287}>
          <Grip />
          <ToolButton aria-label="Материал"><MaterialStack /></ToolButton>
          <Material><OrangePanel />ДСП бук</Material>
        </Toolbar>
        <Toolbar $push><Grip /><Tools items={statusTools} /></Toolbar>
      </Row>
      <Defs />
    </Page>
  );
}
